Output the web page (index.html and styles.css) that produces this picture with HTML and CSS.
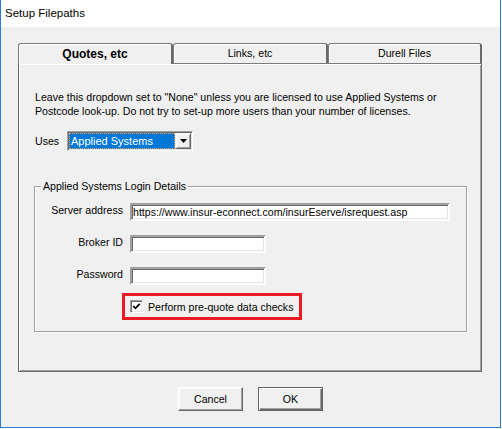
FILE: index.html
```html
<!DOCTYPE html>
<html>
<head>
<meta charset="utf-8">
<title>Setup Filepaths</title>
<link rel="stylesheet" href="styles.css">
</head>
<body>
<div class="window">
  <div class="titlebar">Setup Filepaths</div>
  <div class="client">
    <div class="tabctl">
      <div class="tabrow">
        <div class="tab sel">Quotes, etc</div>
        <div class="tab">Links, etc</div>
        <div class="tab last">Durell Files</div>
      </div>
      <div class="panel">
        <p class="note">Leave this dropdown set to "None" unless you are licensed to use Applied Systems or<br>Postcode look-up. Do not try to set-up more users than your number of licenses.</p>
        <div class="uses">
          <span class="uses-label">Uses</span>
          <div class="combo">
            <div class="combo-val"><span>Applied Systems</span></div>
            <div class="combo-btn"><svg width="7" height="4" viewBox="0 0 7 4"><path d="M0 0H7L3.5 4Z" fill="#000"/></svg></div>
          </div>
        </div>
        <fieldset class="group">
          <legend>Applied Systems Login Details</legend>
          <div class="form">
            <label class="lbl">Server address</label>
            <div class="input wide">https://www.insur-econnect.com/insurEserve/isrequest.asp</div>
            <label class="lbl">Broker ID</label>
            <div class="input short"></div>
            <label class="lbl">Password</label>
            <div class="input short"></div>
            <div class="highlight">
              <span class="chk"><svg width="9" height="9" viewBox="0 0 9 9"><polyline points="1.2,4 3.4,6.3 7.8,1.8" fill="none" stroke="#000" stroke-width="1.8"/></svg></span>
              <span class="chk-label">Perform pre-quote data checks</span>
            </div>
          </div>
        </fieldset>
      </div>
    </div>
    <div class="buttons">
      <div class="btn">Cancel</div>
      <div class="btn def">OK</div>
    </div>
  </div>
</div>
</body>
</html>
```

FILE: styles.css
```css
html, body {
  margin: 0;
  padding: 0;
  background: #ffffff;
}

body {
  font-family: "Liberation Sans", Arial, sans-serif;
  font-size: 10.6px;
  color: #000;
}

.window {
  width: 501px;
  height: 428px;
  box-sizing: border-box;
  border-left: 1px solid #2b7bd0;
  border-right: 1px solid #2b7bd0;
  border-bottom: 1px solid #2b7bd0;
  display: flex;
  flex-direction: column;
}

.titlebar {
  height: 27px;
  line-height: 27px;
  padding-left: 4px;
  background: #ffffff;
  font-size: 11.5px;
}

.client {
  flex: 1;
  background: #f0f0f0;
  padding: 16px 0 0 17px;
  display: flex;
  flex-direction: column;
}

.tabctl {
  width: 464px;
  display: flex;
  flex-direction: column;
}

.tabrow {
  display: flex;
  height: 20px;
  align-items: flex-start;
}

.tab {
  box-sizing: border-box;
  width: 155px;
  height: 20px;
  border: 1px solid #7a7a7a;
  border-bottom: none;
  border-right: 2px solid #6a6a6a;
  border-radius: 3px 3px 0 0;
  background: #f0f0f0;
  box-shadow: inset 1px 1px 0 #ffffff;
  text-align: center;
  line-height: 19px;
  font-size: 10.6px;
}

.tab.last {
  width: 154px;
}

.tab.sel {
  height: 21px;
  margin-bottom: -1px;
  z-index: 1;
  font-weight: bold;
  font-size: 12px;
  line-height: 21px;
}

.panel {
  box-sizing: border-box;
  height: 309px;
  border: 1px solid #696969;
  border-top-color: #7a7a7a;
  box-shadow: inset 1px 1px 0 #ffffff, inset -1px -1px 0 #a0a0a0;
  padding: 26px 0 0 16px;
  display: flex;
  flex-direction: column;
}

.note {
  margin: 0;
  line-height: 14px;
}

.uses {
  margin-top: 13px;
  display: flex;
  align-items: center;
  height: 20px;
}

.uses-label {
  width: 32px;
}

.combo {
  box-sizing: border-box;
  width: 126px;
  height: 20px;
  border: 1px solid;
  border-color: #a0a0a0 #ffffff #ffffff #a0a0a0;
  box-shadow: inset 1px 1px 0 #696969, inset -1px -1px 0 #e3e3e3;
  padding: 1px;
  display: flex;
  background: #ffffff;
}

.combo-val {
  flex: 1;
  box-sizing: border-box;
  background: #0078d7;
  color: #ffffff;
  border: 1px dotted #e8a060;
  line-height: 14px;
  padding-left: 1px;
  font-size: 11px;
}

.combo-btn {
  box-sizing: border-box;
  width: 16px;
  background: #f0f0f0;
  border: 1px solid;
  border-color: #f0f0f0 #696969 #696969 #f0f0f0;
  box-shadow: inset 1px 1px 0 #ffffff, inset -1px -1px 0 #a0a0a0;
  display: flex;
  align-items: center;
  justify-content: center;
}

.group {
  box-sizing: border-box;
  width: 433px;
  margin: 28px 0 0 -1px;
  padding: 0;
  border: 1px solid #a0a0a0;
  box-shadow: 1px 1px 0 #ffffff, inset 1px 1px 0 #ffffff;
  min-inline-size: 0;
}

.group legend {
  margin-left: 6px;
  padding: 0 2px;
  line-height: 14px;
  background: #f0f0f0;
}

.form {
  display: grid;
  grid-template-columns: 88px auto;
  column-gap: 7px;
  row-gap: 14px;
  padding: 10px 0 11px 0;
  justify-content: start;
}

.lbl {
  justify-self: end;
  align-self: start;
  line-height: 14px;
  text-align: right;
  white-space: nowrap;
}

.input {
  box-sizing: border-box;
  height: 18px;
  background: #ffffff;
  border: 2px solid;
  border-color: #a0a0a0 #ffffff #ffffff #a0a0a0;
  box-shadow: inset 1px 1px 0 #696969, inset -1px -1px 0 #e3e3e3;
  line-height: 14px;
  padding-left: 1px;
  white-space: nowrap;
  overflow: hidden;
}

.input.wide {
  width: 320px;
}

.input.short {
  width: 136px;
}

.highlight {
  grid-column: 2;
  justify-self: start;
  margin-left: -8px;
  margin-top: -6px;
  box-sizing: border-box;
  width: 180px;
  height: 27px;
  border: 3px solid #ed1c24;
  display: flex;
  align-items: center;
  padding-left: 5px;
  gap: 5px;
}

.chk {
  flex: none;
  box-sizing: border-box;
  width: 13px;
  height: 13px;
  background: #ffffff;
  border: 1px solid;
  border-color: #a0a0a0 #ffffff #ffffff #a0a0a0;
  box-shadow: inset 1px 1px 0 #696969, inset -1px -1px 0 #e3e3e3;
  display: flex;
  align-items: center;
  justify-content: center;
}

.chk-label {
  line-height: 14px;
  white-space: nowrap;
}

.buttons {
  margin-top: 15px;
  margin-left: -17px;
  display: flex;
  justify-content: center;
  gap: 15px;
}

.btn {
  box-sizing: border-box;
  width: 65px;
  height: 24px;
  border: 1px solid;
  border-color: #ffffff #696969 #696969 #ffffff;
  box-shadow: inset -1px -1px 0 #a0a0a0, inset 1px 1px 0 #f8f8f8;
  background: #f0f0f0;
  display: flex;
  align-items: center;
  justify-content: center;
}

.btn.def {
  border: 1px solid #646464;
  box-shadow: inset 1px 1px 0 #ffffff, inset -1px -1px 0 #696969, inset -2px -2px 0 #a0a0a0;
}
```
